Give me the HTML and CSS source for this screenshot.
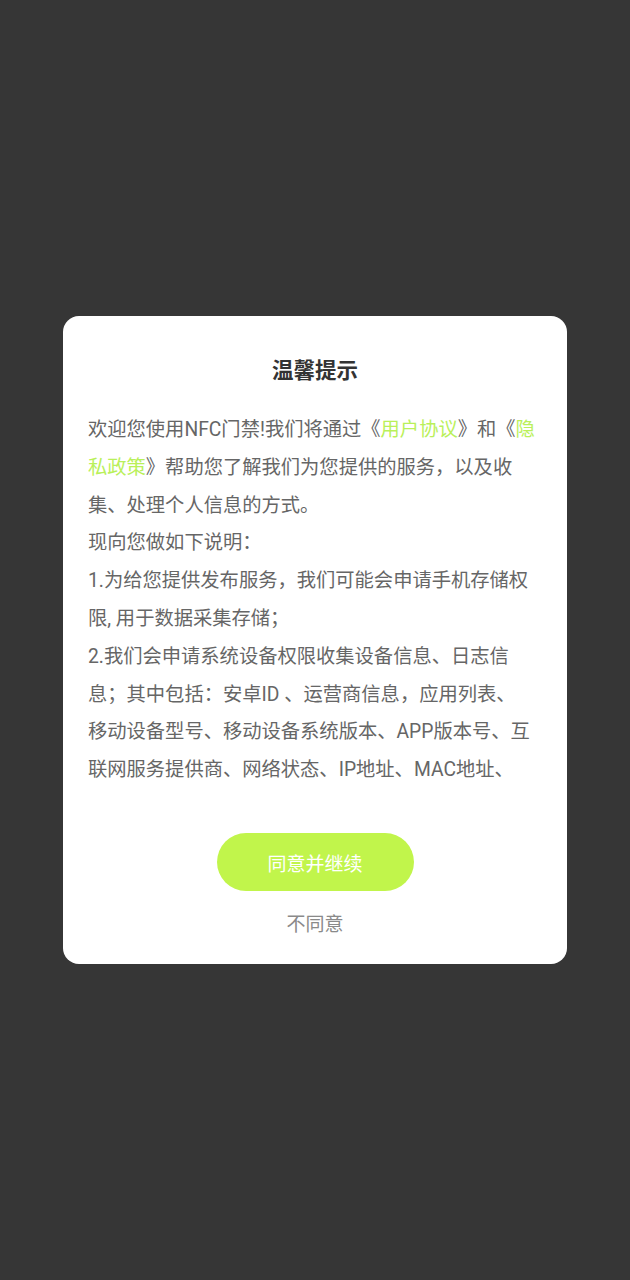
FILE: index.html
```html
<!DOCTYPE html>
<html lang="zh-CN">
<head>
    <meta charset="UTF-8">
    <meta name="viewport" content="width=device-width, initial-scale=1.0">
    <title>温馨提示</title>
    <link rel="stylesheet" href="styles.css">
</head>
<body>
    <div class="mask">
        <div class="dialog">
            <div class="dialog-title">温馨提示</div>

            <div class="dialog-content">
                <p>欢迎您使用NFC门禁!我们将通过《<a class="link" href="#">用户协议</a>》和《<a class="link" href="#">隐<br>私政策</a>》帮助您了解我们为您提供的服务，以及收<br>集、处理个人信息的方式。</p>
                <p>现向您做如下说明：</p>
                <p>1.为给您提供发布服务，我们可能会申请手机存储权<br>限, 用于数据采集存储；</p>
                <p>2.我们会申请系统设备权限收集设备信息、日志信<br>息；其中包括：安卓ID 、运营商信息，应用列表、<br>移动设备型号、移动设备系统版本、APP版本号、互<br>联网服务提供商、网络状态、IP地址、MAC地址、</p>
            </div>

            <button class="agree-btn" type="button">同意并继续</button>
            <div class="disagree">不同意</div>
        </div>
    </div>
</body>
</html>
```

FILE: styles.css
```css
* {
    box-sizing: border-box;
}

body {
    margin: 0;
    background: #363636;
    font-family: Roboto, "Noto Sans CJK SC", sans-serif;
}

.mask {
    min-height: 1280px;
    display: flex;
    align-items: center;
    justify-content: center;
}

.dialog {
    width: 504px;
    background: #fff;
    border-radius: 16px;
    padding: 40px 25px 26px;
    display: flex;
    flex-direction: column;
    align-items: center;
}

.dialog-title {
    font-size: 21.5px;
    line-height: 30px;
    font-weight: bold;
    color: #333;
}

.dialog-content {
    align-self: stretch;
    margin-top: 25px;
    height: 378px;
    overflow: hidden;
    font-size: 19.3px;
    line-height: 37.8px;
    color: #666;
    white-space: nowrap;
}

.dialog-content p {
    margin: 0;
}

.link {
    color: #b9f05a;
    text-decoration: none;
}

.agree-btn {
    margin-top: 44px;
    width: 197px;
    height: 58px;
    border: none;
    border-radius: 29px;
    background: #c1f54b;
    color: #fff;
    font-family: inherit;
    font-size: 19px;
    cursor: pointer;
}

.disagree {
    margin-top: 21px;
    font-size: 19px;
    line-height: 26px;
    color: #8a8a8a;
    cursor: pointer;
}
```
